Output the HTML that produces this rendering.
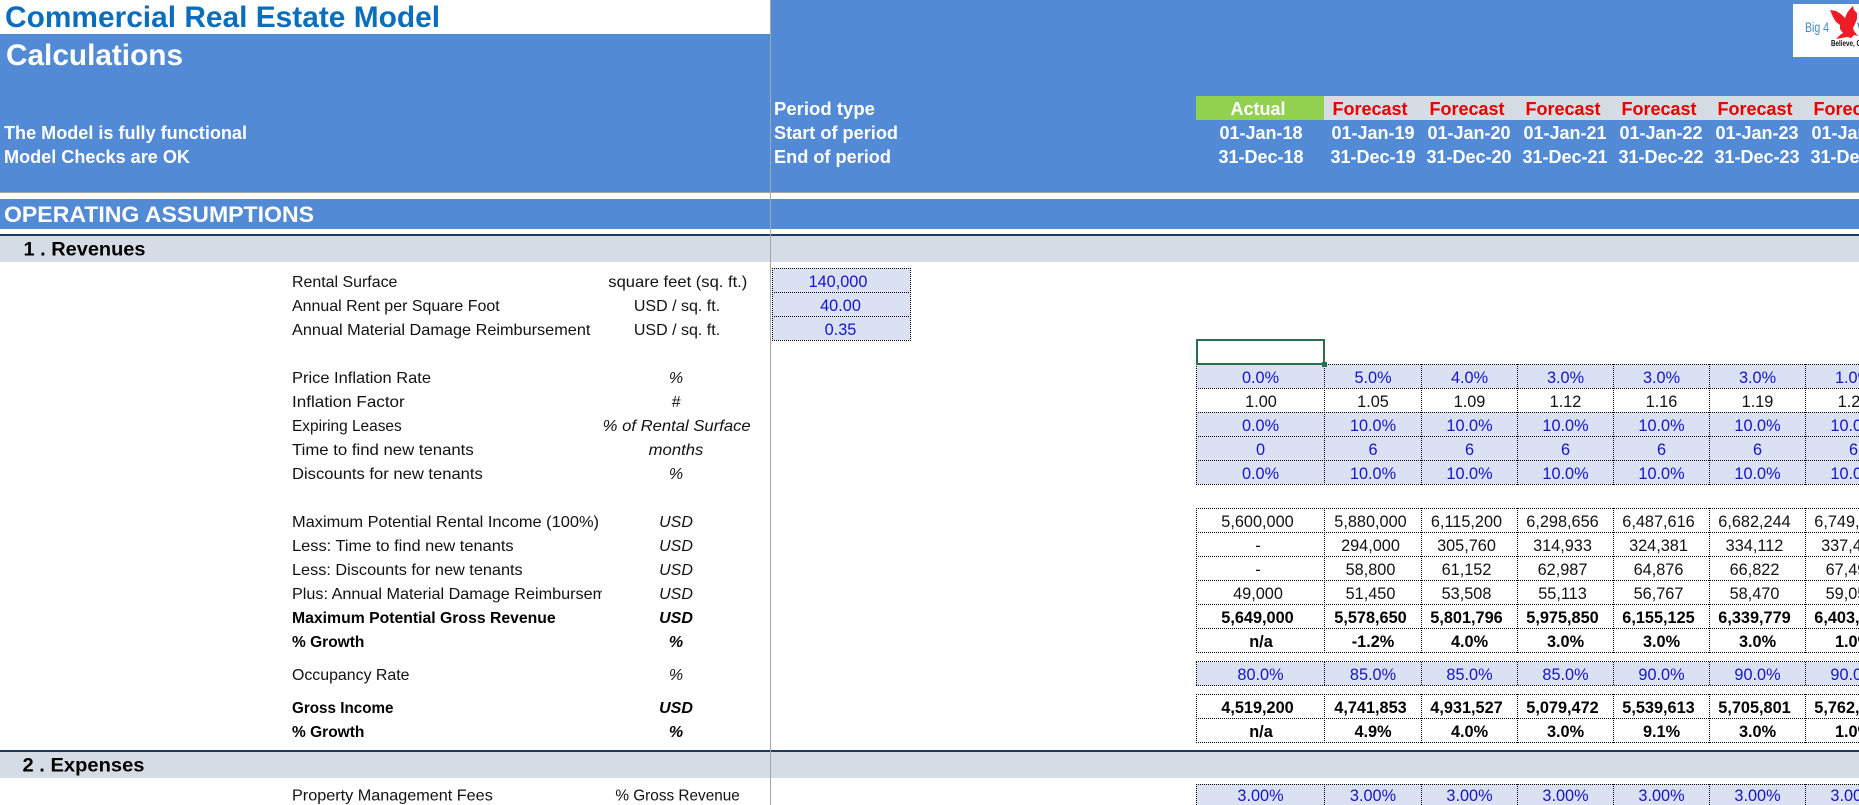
<!DOCTYPE html>
<html lang="en">
<head>
<meta charset="utf-8">
<title>Commercial Real Estate Model - Calculations</title>
<style>
html,body{margin:0;padding:0;background:#fff;width:1859px;height:805px;overflow:hidden}
svg{display:block;position:absolute;left:0;top:0}
text{font-family:"Liberation Sans",Arial,sans-serif;white-space:pre}
.h{font-weight:bold;fill:#fff;font-size:18px}
.hc{font-weight:bold;fill:#fff;font-size:18px;text-anchor:middle}
.f{font-weight:bold;fill:#e60000;font-size:18px;text-anchor:middle}
.l{font-size:16px;fill:#111}
.lb{font-size:16px;font-weight:bold;fill:#000}
.u{font-size:16px;fill:#111;text-anchor:middle}
.ui{font-size:16px;font-style:italic;fill:#111;text-anchor:middle}
.uib{font-size:16px;font-style:italic;font-weight:bold;fill:#000;text-anchor:middle}
.i{font-size:16.300px;fill:#1414c8;text-anchor:middle}
.n{font-size:16.300px;fill:#111;text-anchor:middle}
.b{font-size:16.300px;font-weight:bold;fill:#000;text-anchor:middle}
.d{stroke:#000;stroke-width:1;stroke-dasharray:1 1;fill:none}
</style>
</head>
<body>
<svg width="1859" height="805" viewBox="0 0 1859 805" xmlns="http://www.w3.org/2000/svg">
<defs><clipPath id="cl"><rect x="292" y="570" width="310" height="40"/></clipPath></defs>

<!-- Header backgrounds -->
<rect x="0" y="0" width="1859" height="805" fill="#fff"/>
<rect x="0" y="34" width="770" height="158" fill="#528ad6"/>
<rect x="770" y="0" width="1089" height="192" fill="#528ad6"/>
<rect x="0" y="192" width="1859" height="1" fill="#a6a6a6"/>
<rect x="0" y="199" width="1859" height="30" fill="#528ad6"/>
<rect x="0" y="234" width="1859" height="2" fill="#1f3864"/>
<rect x="0" y="236" width="1859" height="26" fill="#d5dce5"/>
<rect x="0" y="750" width="1859" height="2" fill="#1f3864"/>
<rect x="0" y="752" width="1859" height="26" fill="#d5dce5"/>

<!-- Period header cells -->
<rect x="1196" y="96" width="128" height="24" fill="#92d050"/>
<rect x="1324" y="96" width="535" height="24" fill="#d6dce4"/>

<!-- Input fills -->
<g fill="#d9e1f2">
<rect x="772" y="268" width="139" height="72"/>
<rect x="1196" y="364" width="663" height="24"/>
<rect x="1196" y="412" width="663" height="72"/>
<rect x="1196" y="662" width="663" height="24"/>
<rect x="1196" y="784" width="663" height="21"/>
</g>

<!-- Dotted grid -->
<path class="d" d="M772 268.500H911M772 292.500H911M772 316.500H911M772 340.500H911M772.500 268V341M910.500 268V341"/>
<path class="d" d="M1196 364.500H1859M1196 388.500H1859M1196 412.500H1859M1196 436.500H1859M1196 460.500H1859M1196 484.500H1859"/>
<path class="d" d="M1196 508.500H1859M1196 532.500H1859M1196 556.500H1859M1196 580.500H1859M1196 604.500H1859M1196 628.500H1859M1196 652.500H1859"/>
<path class="d" d="M1196 661.500H1859M1196 685.500H1859M1196 694.500H1859M1196 718.500H1859M1196 742.500H1859M1196 784.500H1859"/>
<path class="d" d="M1196.500 364V485M1324.500 364V485M1421.500 364V485M1517.500 364V485M1613.500 364V485M1709.500 364V485M1805.500 364V485"/>
<path class="d" d="M1196.500 508V653M1324.500 508V653M1421.500 508V653M1517.500 508V653M1613.500 508V653M1709.500 508V653M1805.500 508V653"/>
<path class="d" d="M1196.500 662V686M1324.500 662V686M1421.500 662V686M1517.500 662V686M1613.500 662V686M1709.500 662V686M1805.500 662V686"/>
<path class="d" d="M1196.500 694V743M1324.500 694V743M1421.500 694V743M1517.500 694V743M1613.500 694V743M1709.500 694V743M1805.500 694V743"/>
<path class="d" d="M1196.500 784V805M1324.500 784V805M1421.500 784V805M1517.500 784V805M1613.500 784V805M1709.500 784V805M1805.500 784V805"/>

<!-- Freeze pane divider -->
<rect x="770" y="0" width="1" height="805" fill="#a6a6a6"/>

<!-- Selected cell -->
<rect x="1197" y="340" width="127" height="24" fill="none" stroke="#2a6e4e" stroke-width="2"/>
<rect x="1322" y="362" width="5" height="5" fill="#2a6e4e"/>

<!-- Title block -->
<text x="5" y="27" font-size="29.500" font-weight="bold" fill="#0a6ebd" textLength="435" lengthAdjust="spacingAndGlyphs">Commercial Real Estate Model</text>
<text x="6" y="65" font-size="29.500" font-weight="bold" fill="#fff" textLength="177" lengthAdjust="spacingAndGlyphs">Calculations</text>
<text class="h" x="4" y="139" textLength="243" lengthAdjust="spacingAndGlyphs">The Model is fully functional</text>
<text class="h" x="4" y="163" textLength="186" lengthAdjust="spacingAndGlyphs">Model Checks are OK</text>
<text x="4" y="222" font-size="22px" font-weight="bold" fill="#fff" textLength="310" lengthAdjust="spacingAndGlyphs">OPERATING ASSUMPTIONS</text>
<text x="23.500" y="255.500" font-size="19px" font-weight="bold" fill="#000" textLength="122" lengthAdjust="spacingAndGlyphs">1 . Revenues</text>
<text x="22.500" y="771.500" font-size="19px" font-weight="bold" fill="#000" textLength="122" lengthAdjust="spacingAndGlyphs">2 . Expenses</text>

<text class="h" x="774" y="115" textLength="101" lengthAdjust="spacingAndGlyphs">Period type</text>
<text class="h" x="774" y="139" textLength="124" lengthAdjust="spacingAndGlyphs">Start of period</text>
<text class="h" x="774" y="163" textLength="117" lengthAdjust="spacingAndGlyphs">End of period</text>

<!-- Period rows -->
<text class="hc" x="1258" y="115">Actual</text>
<text class="f" x="1370" y="115">Forecast</text><text class="f" x="1467" y="115">Forecast</text><text class="f" x="1563" y="115">Forecast</text><text class="f" x="1659" y="115">Forecast</text><text class="f" x="1755" y="115">Forecast</text><text class="f" x="1851" y="115">Forecast</text>
<text class="hc" x="1261" y="139">01-Jan-18</text><text class="hc" x="1373" y="139">01-Jan-19</text><text class="hc" x="1469" y="139">01-Jan-20</text><text class="hc" x="1565" y="139">01-Jan-21</text><text class="hc" x="1661" y="139">01-Jan-22</text><text class="hc" x="1757" y="139">01-Jan-23</text><text class="hc" x="1853" y="139">01-Jan-24</text>
<text class="hc" x="1261" y="163">31-Dec-18</text><text class="hc" x="1373" y="163">31-Dec-19</text><text class="hc" x="1469" y="163">31-Dec-20</text><text class="hc" x="1565" y="163">31-Dec-21</text><text class="hc" x="1661" y="163">31-Dec-22</text><text class="hc" x="1757" y="163">31-Dec-23</text><text class="hc" x="1853" y="163">31-Dec-24</text>

<!-- Logo -->
<rect x="1793" y="4" width="66" height="53" fill="#fff"/>
<text x="1805" y="32" font-size="14px" fill="#3f8ac4" textLength="24" lengthAdjust="spacingAndGlyphs">Big 4</text>
<text x="1857" y="32" font-size="14px" fill="#3f8ac4">W</text>
<path fill="#ee1c25" d="M1830 10L1836 11L1841 14L1845 18L1847 13L1850 9L1853 6L1854 10L1857 13L1857 19L1855 24L1853 28L1854 31L1858 36L1854 35L1851 38L1847 37L1842 38L1836 39L1840 35L1843 33L1840 29L1840 25L1836 22L1833 17Z"/>
<text x="1831" y="46" font-size="8px" font-weight="bold" fill="#111" textLength="30" lengthAdjust="spacingAndGlyphs">Believe, C</text>

<!-- Labels -->
<text class="l" x="292" y="287" textLength="105.400" lengthAdjust="spacingAndGlyphs">Rental Surface</text>
<text class="l" x="292" y="311" textLength="207.700" lengthAdjust="spacingAndGlyphs">Annual Rent per Square Foot</text>
<text class="l" x="292" y="335" textLength="298.400" lengthAdjust="spacingAndGlyphs">Annual Material Damage Reimbursement</text>
<text class="l" x="292" y="383" textLength="139" lengthAdjust="spacingAndGlyphs">Price Inflation Rate</text>
<text class="l" x="292" y="407" textLength="112.700" lengthAdjust="spacingAndGlyphs">Inflation Factor</text>
<text class="l" x="292" y="431" textLength="109.700" lengthAdjust="spacingAndGlyphs">Expiring Leases</text>
<text class="l" x="292" y="455" textLength="181.700" lengthAdjust="spacingAndGlyphs">Time to find new tenants</text>
<text class="l" x="292" y="479" textLength="190.800" lengthAdjust="spacingAndGlyphs">Discounts for new tenants</text>
<text class="l" x="292" y="527" textLength="307" lengthAdjust="spacingAndGlyphs">Maximum Potential Rental Income (100%)</text>
<text class="l" x="292" y="551" textLength="221.600" lengthAdjust="spacingAndGlyphs">Less: Time to find new tenants</text>
<text class="l" x="292" y="575" textLength="230.700" lengthAdjust="spacingAndGlyphs">Less: Discounts for new tenants</text>
<g clip-path="url(#cl)"><text class="l" x="292" y="599" textLength="336.600" lengthAdjust="spacingAndGlyphs">Plus: Annual Material Damage Reimbursement</text></g>
<text class="lb" x="292" y="623" textLength="263.700" lengthAdjust="spacingAndGlyphs">Maximum Potential Gross Revenue</text>
<text class="lb" x="292" y="647" textLength="72.400" lengthAdjust="spacingAndGlyphs">% Growth</text>
<text class="l" x="292" y="680" textLength="117.500" lengthAdjust="spacingAndGlyphs">Occupancy Rate</text>
<text class="lb" x="292" y="713" textLength="101.500" lengthAdjust="spacingAndGlyphs">Gross Income</text>
<text class="lb" x="292" y="737" textLength="72.400" lengthAdjust="spacingAndGlyphs">% Growth</text>
<text class="l" x="292" y="800.500" textLength="200.800" lengthAdjust="spacingAndGlyphs">Property Management Fees</text>

<!-- Units -->
<text class="u" x="677.800" y="287" textLength="139" lengthAdjust="spacingAndGlyphs">square feet (sq. ft.)</text>
<text class="u" x="677" y="311" textLength="86.300" lengthAdjust="spacingAndGlyphs">USD / sq. ft.</text>
<text class="u" x="677" y="335" textLength="86.300" lengthAdjust="spacingAndGlyphs">USD / sq. ft.</text>
<text class="ui" x="676" y="383">%</text>
<text class="ui" x="676" y="407">#</text>
<text class="ui" x="676.700" y="431" textLength="148" lengthAdjust="spacingAndGlyphs">% of Rental Surface</text>
<text class="ui" x="676" y="455" textLength="54.600" lengthAdjust="spacingAndGlyphs">months</text>
<text class="ui" x="676" y="479">%</text>
<text class="ui" x="676" y="527">USD</text>
<text class="ui" x="676" y="551">USD</text>
<text class="ui" x="676" y="575">USD</text>
<text class="ui" x="676" y="599">USD</text>
<text class="uib" x="676" y="623">USD</text>
<text class="uib" x="676" y="647">%</text>
<text class="ui" x="676" y="680">%</text>
<text class="uib" x="676" y="713">USD</text>
<text class="uib" x="676" y="737">%</text>
<text class="u" x="677.600" y="800.500" textLength="124.500" lengthAdjust="spacingAndGlyphs">% Gross Revenue</text>

<!-- Single inputs -->
<text class="i" x="838" y="287">140,000</text>
<text class="i" x="840.500" y="311">40.00</text>
<text class="i" x="840.500" y="335">0.35</text>

<!-- Price Inflation Rate -->
<text class="i" x="1260.500" y="383">0.0%</text><text class="i" x="1373" y="383">5.0%</text><text class="i" x="1469.500" y="383">4.0%</text><text class="i" x="1565.500" y="383">3.0%</text><text class="i" x="1661.500" y="383">3.0%</text><text class="i" x="1757.500" y="383">3.0%</text><text class="i" x="1853.500" y="383">1.0%</text>
<!-- Inflation Factor -->
<text class="n" x="1261" y="407">1.00</text><text class="n" x="1373" y="407">1.05</text><text class="n" x="1469.500" y="407">1.09</text><text class="n" x="1565.500" y="407">1.12</text><text class="n" x="1661.500" y="407">1.16</text><text class="n" x="1757.500" y="407">1.19</text><text class="n" x="1853.500" y="407">1.20</text>
<!-- Expiring Leases -->
<text class="i" x="1260.500" y="431">0.0%</text><text class="i" x="1373" y="431">10.0%</text><text class="i" x="1469.500" y="431">10.0%</text><text class="i" x="1565.500" y="431">10.0%</text><text class="i" x="1661.500" y="431">10.0%</text><text class="i" x="1757.500" y="431">10.0%</text><text class="i" x="1853.500" y="431">10.0%</text>
<!-- Time to find -->
<text class="i" x="1260.500" y="455">0</text><text class="i" x="1373" y="455">6</text><text class="i" x="1469.500" y="455">6</text><text class="i" x="1565.500" y="455">6</text><text class="i" x="1661.500" y="455">6</text><text class="i" x="1757.500" y="455">6</text><text class="i" x="1853.500" y="455">6</text>
<!-- Discounts -->
<text class="i" x="1260.500" y="479">0.0%</text><text class="i" x="1373" y="479">10.0%</text><text class="i" x="1469.500" y="479">10.0%</text><text class="i" x="1565.500" y="479">10.0%</text><text class="i" x="1661.500" y="479">10.0%</text><text class="i" x="1757.500" y="479">10.0%</text><text class="i" x="1853.500" y="479">10.0%</text>
<!-- Max potential rental income -->
<text class="n" x="1257.500" y="527">5,600,000</text><text class="n" x="1370.500" y="527">5,880,000</text><text class="n" x="1466.500" y="527">6,115,200</text><text class="n" x="1562.500" y="527">6,298,656</text><text class="n" x="1658.500" y="527">6,487,616</text><text class="n" x="1754.500" y="527">6,682,244</text><text class="n" x="1850.500" y="527">6,749,066</text>
<!-- Less time -->
<text class="n" x="1258" y="551">-</text><text class="n" x="1370.500" y="551">294,000</text><text class="n" x="1466.500" y="551">305,760</text><text class="n" x="1562.500" y="551">314,933</text><text class="n" x="1658.500" y="551">324,381</text><text class="n" x="1754.500" y="551">334,112</text><text class="n" x="1850.500" y="551">337,453</text>
<!-- Less discounts -->
<text class="n" x="1258" y="575">-</text><text class="n" x="1370.500" y="575">58,800</text><text class="n" x="1466.500" y="575">61,152</text><text class="n" x="1562.500" y="575">62,987</text><text class="n" x="1658.500" y="575">64,876</text><text class="n" x="1754.500" y="575">66,822</text><text class="n" x="1850.500" y="575">67,491</text>
<!-- Plus -->
<text class="n" x="1258" y="599">49,000</text><text class="n" x="1370.500" y="599">51,450</text><text class="n" x="1466.500" y="599">53,508</text><text class="n" x="1562.500" y="599">55,113</text><text class="n" x="1658.500" y="599">56,767</text><text class="n" x="1754.500" y="599">58,470</text><text class="n" x="1850.500" y="599">59,054</text>
<!-- Max gross -->
<text class="b" x="1257.500" y="623">5,649,000</text><text class="b" x="1370.500" y="623">5,578,650</text><text class="b" x="1466.500" y="623">5,801,796</text><text class="b" x="1562.500" y="623">5,975,850</text><text class="b" x="1658.500" y="623">6,155,125</text><text class="b" x="1754.500" y="623">6,339,779</text><text class="b" x="1850.500" y="623">6,403,176</text>
<!-- % growth -->
<text class="b" x="1261" y="647">n/a</text><text class="b" x="1373" y="647">-1.2%</text><text class="b" x="1469.500" y="647">4.0%</text><text class="b" x="1565.500" y="647">3.0%</text><text class="b" x="1661.500" y="647">3.0%</text><text class="b" x="1757.500" y="647">3.0%</text><text class="b" x="1853.500" y="647">1.0%</text>
<!-- Occupancy -->
<text class="i" x="1260.500" y="680">80.0%</text><text class="i" x="1373" y="680">85.0%</text><text class="i" x="1469.500" y="680">85.0%</text><text class="i" x="1565.500" y="680">85.0%</text><text class="i" x="1661.500" y="680">90.0%</text><text class="i" x="1757.500" y="680">90.0%</text><text class="i" x="1853.500" y="680">90.0%</text>
<!-- Gross income -->
<text class="b" x="1257.500" y="713">4,519,200</text><text class="b" x="1370.500" y="713">4,741,853</text><text class="b" x="1466.500" y="713">4,931,527</text><text class="b" x="1562.500" y="713">5,079,472</text><text class="b" x="1658.500" y="713">5,539,613</text><text class="b" x="1754.500" y="713">5,705,801</text><text class="b" x="1850.500" y="713">5,762,859</text>
<!-- % growth -->
<text class="b" x="1261" y="737">n/a</text><text class="b" x="1373" y="737">4.9%</text><text class="b" x="1469.500" y="737">4.0%</text><text class="b" x="1565.500" y="737">3.0%</text><text class="b" x="1661.500" y="737">9.1%</text><text class="b" x="1757.500" y="737">3.0%</text><text class="b" x="1853.500" y="737">1.0%</text>
<!-- Property mgmt -->
<text class="i" x="1260.500" y="801">3.00%</text><text class="i" x="1373" y="801">3.00%</text><text class="i" x="1469.500" y="801">3.00%</text><text class="i" x="1565.500" y="801">3.00%</text><text class="i" x="1661.500" y="801">3.00%</text><text class="i" x="1757.500" y="801">3.00%</text><text class="i" x="1853.500" y="801">3.00%</text>
</svg>
</body>
</html>
